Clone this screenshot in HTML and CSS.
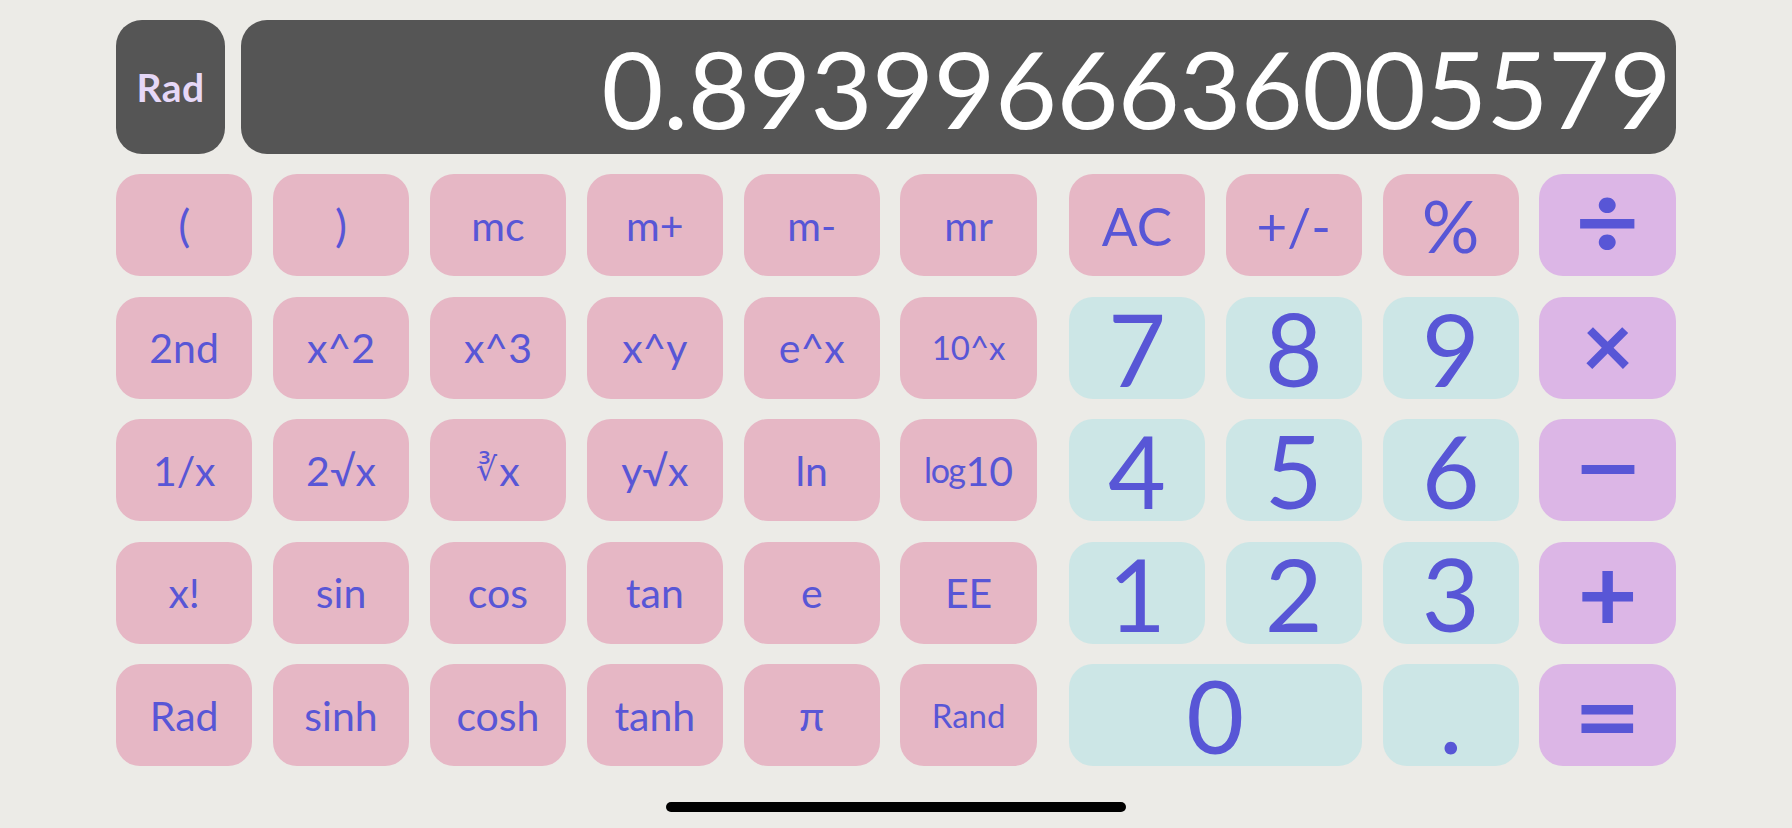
FILE: index.html
```html
<!DOCTYPE html>
<html lang="en">
<head>
<meta charset="utf-8">
<title>Calculator</title>
<link rel="stylesheet" href="styles.css">
</head>
<body>
<div class="app">
  <div class="top">
    <div class="mode">Rad</div>
    <div class="display">0.8939966636005579</div>
  </div>
  <div class="pad">
    <div class="grid sci">
      <div class="key fn paren">(</div>
      <div class="key fn paren">)</div>
      <div class="key fn">mc</div>
      <div class="key fn">m+</div>
      <div class="key fn">m-</div>
      <div class="key fn">mr</div>

      <div class="key fn">2nd</div>
      <div class="key fn">x^2</div>
      <div class="key fn">x^3</div>
      <div class="key fn">x^y</div>
      <div class="key fn">e^x</div>
      <div class="key fn small">10^x</div>

      <div class="key fn">1/x</div>
      <div class="key fn">2√x</div>
      <div class="key fn"><span class="cbrt">∛</span>x</div>
      <div class="key fn">y√x</div>
      <div class="key fn">ln</div>
      <div class="key fn"><span class="log">log</span>10</div>

      <div class="key fn">x!</div>
      <div class="key fn">sin</div>
      <div class="key fn">cos</div>
      <div class="key fn">tan</div>
      <div class="key fn">e</div>
      <div class="key fn">EE</div>

      <div class="key fn">Rad</div>
      <div class="key fn">sinh</div>
      <div class="key fn">cosh</div>
      <div class="key fn">tanh</div>
      <div class="key fn">π</div>
      <div class="key fn small">Rand</div>
    </div>
    <div class="grid num">
      <div class="key top-fn">AC</div>
      <div class="key top-fn">+/-</div>
      <div class="key top-fn pct">%</div>
      <div class="key op div"><span class="g">÷</span></div>

      <div class="key digit">7</div>
      <div class="key digit">8</div>
      <div class="key digit">9</div>
      <div class="key op mul"><span class="g">×</span></div>

      <div class="key digit">4</div>
      <div class="key digit">5</div>
      <div class="key digit">6</div>
      <div class="key op sub"><span class="g">−</span></div>

      <div class="key digit">1</div>
      <div class="key digit">2</div>
      <div class="key digit">3</div>
      <div class="key op add"><span class="g">+</span></div>

      <div class="key digit zero">0</div>
      <div class="key digit">.</div>
      <div class="key op eq"><span class="g">=</span></div>
    </div>
  </div>
  <div class="home"></div>
</div>
</body>
</html>
```
FILE: styles.css
```css
* { box-sizing: border-box; }

html, body {
  margin: 0;
  padding: 0;
  background: #ecebe7;
}

body {
  width: 1792px;
  height: 828px;
  overflow: hidden;
  font-family: "Lato", "DejaVu Sans", sans-serif;
}

.app {
  padding: 20px 116px 0;
  display: flex;
  flex-direction: column;
}

.top {
  display: flex;
  gap: 16px;
  height: 134px;
}

.mode {
  width: 109px;
  background: #555555;
  border-radius: 26px;
  display: flex;
  align-items: center;
  justify-content: center;
  color: #e6d8f7;
  font-weight: 700;
  font-size: 39px;
  letter-spacing: 0.5px;
}

.display {
  flex: 1;
  background: #555555;
  border-radius: 26px;
  display: flex;
  align-items: center;
  justify-content: flex-end;
  padding-right: 5px;
  color: #ffffff;
  font-size: 107px;
  font-weight: 400;
  letter-spacing: -0.6px;
  line-height: 1;
}

.pad {
  display: flex;
  gap: 32px;
  margin-top: 20px;
}

.grid {
  display: grid;
  grid-auto-rows: 102px;
  row-gap: 20.5px;
  column-gap: 20.6px;
}

.sci { grid-template-columns: repeat(6, 136.3px); }
.num { grid-template-columns: repeat(4, 136.3px); }

.key {
  border-radius: 24px;
  display: flex;
  align-items: center;
  justify-content: center;
  color: #5856d6;
  line-height: 1;
}

.fn {
  background: #e6b7c5;
  font-size: 41px;
}

.fn.paren { font-size: 45px; }

.fn.small { font-size: 33px; }

.cbrt {
  font-family: "Liberation Serif", serif;
  font-size: 33px;
  margin-right: 2px;
}

.log {
  font-size: 34px;
  letter-spacing: -1.5px;
  margin-right: 1px;
}

.top-fn {
  background: #e6b7c5;
  font-size: 53px;
}

.top-fn.pct { font-size: 72px; }

.digit {
  background: #cce6e6;
  font-size: 100px;
}

.zero { grid-column: span 2; }

.op {
  background: #dcb6e6;
  font-weight: 700;
  line-height: 0.6;
}

.op .g { display: inline-block; }

.op.div { font-size: 104px; padding-bottom: 11px; }
.op.div .g { transform: scaleX(1.07); }
.op.mul { font-size: 90px; padding-bottom: 9px; }
.op.sub { font-size: 100px; padding-bottom: 12px; }
.op.sub .g { transform: scaleX(1.19); }
.op.add { font-size: 104px; }
.op.eq  { font-size: 104px; padding-bottom: 2px; }
.op.eq .g { transform: scaleX(1.12); }

.home {
  align-self: center;
  width: 460px;
  height: 10px;
  border-radius: 5px;
  background: #000000;
  margin-top: 35.5px;
}
```
